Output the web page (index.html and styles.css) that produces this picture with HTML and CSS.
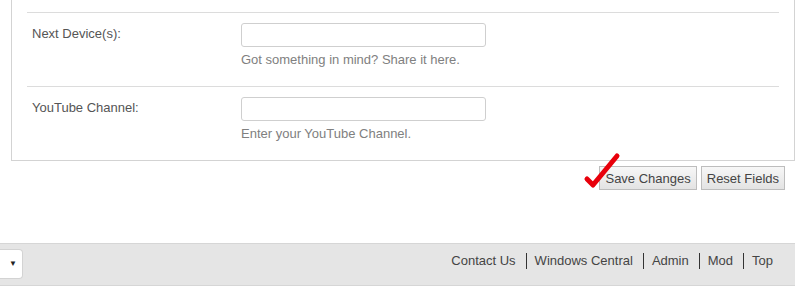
FILE: index.html
```html
<!DOCTYPE html>
<html lang="en">
<head>
  <meta charset="UTF-8">
  <meta name="viewport" content="width=device-width, initial-scale=1.0">
  <title>Edit Profile</title>
  <link rel="stylesheet" href="styles.css">
</head>
<body>

<form class="profile-form">
  <div class="panel">
    <div class="row">
      <label class="row-label" for="next-device">Next Device(s):</label>
      <div class="row-field">
        <input type="text" id="next-device" class="text-input">
        <p class="hint">Got something in mind? Share it here.</p>
      </div>
    </div>
    <div class="row">
      <label class="row-label" for="youtube">YouTube Channel:</label>
      <div class="row-field">
        <input type="text" id="youtube" class="text-input">
        <p class="hint">Enter your YouTube Channel.</p>
      </div>
    </div>
  </div>

  <div class="actions">
    <span class="save-wrap">
      <!-- red tick someone drew on the screenshot -->
      <svg class="tick" width="40" height="40" viewBox="0 0 40 40">
        <path d="M4 27 L10 33 L34 4" fill="none" stroke="#e8000b" stroke-width="5" stroke-linecap="round" stroke-linejoin="round"/>
      </svg>
      <button type="button" class="btn">Save Changes</button>
    </span>
    <button type="reset" class="btn">Reset Fields</button>
  </div>
</form>

<div class="footer">
  <div class="style-chooser"><span class="arrow">&#9660;</span></div>
  <ul class="footer-links">
    <li><a href="#">Contact Us</a></li>
    <li><a href="#">Windows Central</a></li>
    <li><a href="#">Admin</a></li>
    <li><a href="#">Mod</a></li>
    <li><a href="#">Top</a></li>
  </ul>
</div>

</body>
</html>
```

FILE: styles.css
```css
body {
  margin: 0;
  background: #fff;
  color: #555;
  font-family: "Liberation Sans", Arial, sans-serif;
  font-size: 13px;
  line-height: 16px;
}
.profile-form {
  width: 784px;
  margin-left: 11px;
}
.panel {
  border: 1px solid #d3d3d3;
  border-top: none;
  padding: 12px 15px 0;
}
.row {
  display: flex;
  border-top: 1px solid #dcdcdc;
  padding: 10px 0 18px;
}
.row-label {
  width: 209px;
  padding: 3px 0 0 5px;
  color: #555;
}
.row-field {
  display: flex;
  flex-direction: column;
}
.text-input {
  box-sizing: border-box;
  width: 245px;
  height: 24px;
  margin: 0;
  border: 1px solid #cfcfcf;
  border-radius: 3px;
  background: #fff;
}
.hint {
  margin: 5px 0 0;
  color: #808080;
}
.actions {
  display: flex;
  justify-content: flex-end;
  gap: 4px;
  padding: 5px 10px 0 0;
}
.save-wrap {
  position: relative;
  display: flex;
}
.tick {
  position: absolute;
  left: -16px;
  top: -14px;
}
.btn {
  height: 24px;
  padding: 0 5px;
  border: 1px solid #bdbdbd;
  background: linear-gradient(#f7f7f7, #e3e3e3);
  color: #444;
  font-family: inherit;
  font-size: 13px;
}
.footer {
  display: flex;
  justify-content: space-between;
  align-items: flex-start;
  width: 795px;
  height: 41px;
  margin-top: 53px;
  background: #e5e5e5;
  border-top: 1px solid #d6d6d6;
  border-bottom: 1px solid #d6d6d6;
}
.style-chooser {
  width: 22px;
  height: 28px;
  margin-top: 5px;
  background: #fff;
  border: 1px solid #d3d3d3;
  border-left: none;
  border-radius: 0 4px 4px 0;
  display: flex;
  align-items: center;
}
.arrow {
  margin-left: 9px;
  font-size: 8px;
  color: #222;
}
.footer-links {
  display: flex;
  list-style: none;
  margin: 9px 22px 0 0;
  padding: 0;
}
.footer-links li + li {
  margin-left: 10px;
  padding-left: 8px;
  border-left: 1px solid #333;
}
.footer-links a {
  color: #444;
  text-decoration: none;
}
```
